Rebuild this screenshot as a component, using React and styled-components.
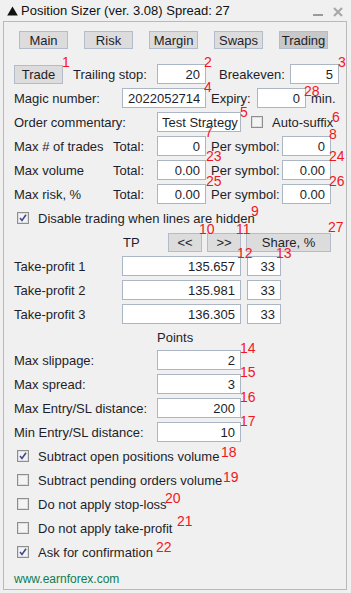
import React from 'react';
import styled, { createGlobalStyle } from 'styled-components';

const GlobalStyle = createGlobalStyle`
  body {
    margin: 0;
    background: #f0f0f0;
    font-family: "Liberation Sans", Arial, sans-serif;
    font-size: 13px;
    color: #1e1e2a;
  }
  * { box-sizing: border-box; }
`;

const Window = styled.div`
  position: relative;
  width: 351px;
  height: 593px;
  padding: 0 4px 3px 3px;
  display: flex;
  flex-direction: column;
  background: #f0f0f0;
`;

const TitleBar = styled.div`
  height: 23px;
  display: flex;
  align-items: center;
  padding: 0 4px 0 4px;
  color: #111;
`;

const TitleText = styled.span`
  margin-left: 3px;
  white-space: nowrap;
`;

const TitleIcons = styled.div`
  margin-left: auto;
  display: flex;
  align-items: center;
  gap: 10px;
  padding-top: 2px;
`;

const Body = styled.div`
  flex: 1;
  border: 1px solid #b9b9b9;
  display: flex;
  flex-direction: column;
`;

const Tabs = styled.div`
  display: flex;
  gap: 16px;
  padding: 9px 0 0 15px;
`;

const Tab = styled.div`
  width: 49px;
  height: 18px;
  border: 1px solid #b2bccb;
  background: ${p => (p.$active ? '#c8c8c8' : '#dcdcdc')};
  display: flex;
  align-items: center;
  justify-content: center;
  font-size: 13px;
`;

const Content = styled.div`
  display: flex;
  flex-direction: column;
  gap: 4px;
  padding: 15px 0 0 10px;
`;

const Row = styled.div`
  display: flex;
  align-items: center;
  height: ${p => p.$h || 20}px;
`;

const Label = styled.span`
  width: ${p => (p.$w ? `${p.$w}px` : 'auto')};
  flex-shrink: 0;
  padding-left: ${p => p.$pl || 0}px;
  white-space: nowrap;
`;

const Field = styled.input`
  width: ${p => p.$w}px;
  margin-left: ${p => p.$ml || 0}px;
  height: 20px;
  flex-shrink: 0;
  border: 1px solid #abb6c4;
  background: #fff;
  font: inherit;
  color: #1e1e2a;
  text-align: ${p => p.$align || 'right'};
  padding: ${p => (p.$align === 'left' ? '0 1px 0 4px' : '0 5px')};
  outline: none;
`;

const Button = styled.div`
  width: ${p => p.$w}px;
  margin-left: ${p => p.$ml || 0}px;
  height: 19px;
  flex-shrink: 0;
  border: 1px solid #b2bccb;
  background: #dcdcdc;
  display: flex;
  align-items: center;
  justify-content: center;
`;

const CheckRow = styled(Row)`
  padding-left: ${p => p.$pl || 3}px;
`;

const CheckLabel = styled.span`
  margin-left: 9px;
  white-space: nowrap;
`;

const Footer = styled.div`
  margin-top: 3px;
  height: 20px;
  display: flex;
  align-items: center;
  font-size: 12px;
  color: #0b7d55;
`;

const Mark = styled.span`
  position: absolute;
  left: ${p => p.$x - 1}px;
  top: ${p => p.$y - 2}px;
  font-family: "Liberation Sans", Arial, sans-serif;
  font-size: 14px;
  line-height: 1;
  color: #f2161e;
  pointer-events: none;
`;

const Box = ({ checked }) => (
  <svg width="12" height="12" viewBox="0 0 12 12">
    <rect x="0.5" y="0.5" width="11" height="11" fill="#f4f4f4" stroke="#8e8e8e" />
    <rect x="1.5" y="1.5" width="9" height="9" fill="none" stroke="#dedede" />
    {checked && (
      <path d="M3 6 L5 8.5 L9 2.8" fill="none" stroke="#3d4a8f" strokeWidth="1.6" />
    )}
  </svg>
);

const Check = ({ checked, children, pl }) => (
  <CheckRow $pl={pl}>
    <Box checked={checked} />
    <CheckLabel>{children}</CheckLabel>
  </CheckRow>
);

const marks = [
  ['1', 63, 57], ['2', 205, 57], ['3', 339, 57], ['4', 205, 82], ['28', 305, 86],
  ['5', 241, 107], ['6', 333, 112], ['7', 206, 127], ['8', 330, 129],
  ['23', 207, 151], ['24', 330, 151], ['25', 207, 176], ['26', 330, 176],
  ['9', 252, 206], ['10', 200, 224], ['11', 237, 224], ['27', 329, 222],
  ['12', 238, 248], ['13', 277, 248], ['14', 241, 343], ['15', 241, 367],
  ['16', 241, 392], ['17', 241, 416], ['18', 222, 447], ['19', 224, 472],
  ['20', 166, 493], ['21', 178, 516], ['22', 157, 542],
];

const limits = [
  ['Max # of trades', '0', '0'],
  ['Max volume', '0.00', '0.00'],
  ['Max risk, %', '0.00', '0.00'],
];

const takeProfits = [
  ['Take-profit 1', '135.657'],
  ['Take-profit 2', '135.981'],
  ['Take-profit 3', '136.305'],
];

const points = [
  ['Max slippage:', '2'],
  ['Max spread:', '3'],
  ['Max Entry/SL distance:', '200'],
  ['Min Entry/SL distance:', '10'],
];

const App = () => {
  return (
    <Window>
      <GlobalStyle />
      <TitleBar>
        <svg width="11" height="10" viewBox="0 0 11 10">
          <path d="M5.5 0.5 L10.8 9.5 L0.2 9.5 Z" fill="#111" />
        </svg>
        <TitleText>Position Sizer (ver. 3.08) Spread: 27</TitleText>
        <TitleIcons>
          <svg width="10" height="10" viewBox="0 0 10 10">
            <rect x="0" y="7" width="10" height="2" fill="#9a9a9a" />
          </svg>
          <svg width="10" height="10" viewBox="0 0 10 10">
            <path d="M1 1 L9 9 M9 1 L1 9" stroke="#a8a8a8" strokeWidth="2.2" />
          </svg>
        </TitleIcons>
      </TitleBar>
      <Body>
        <Tabs>
          <Tab>Main</Tab>
          <Tab>Risk</Tab>
          <Tab>Margin</Tab>
          <Tab>Swaps</Tab>
          <Tab $active>Trading</Tab>
        </Tabs>
        <Content>
          <Row>
            <Button $w={49}>Trade</Button>
            <Label $w={94} $pl={10}>Trailing stop:</Label>
            <Field $w={49} defaultValue="20" readOnly />
            <Label $w={84} $pl={13}>Breakeven:</Label>
            <Field $w={49} defaultValue="5" readOnly />
          </Row>
          <Row>
            <Label $w={108}>Magic number:</Label>
            <Field $w={84} defaultValue="2022052714" readOnly />
            <Label $w={51} $pl={5}>Expiry:</Label>
            <Field $w={49} defaultValue="0" readOnly />
            <Label $pl={5}>min.</Label>
          </Row>
          <Row>
            <Label $w={143}>Order commentary:</Label>
            <Field $w={84} $align="left" defaultValue="Test Strategy" readOnly />
            <CheckRow $pl={10}>
              <Box />
              <CheckLabel>Auto-suffix</CheckLabel>
            </CheckRow>
          </Row>
          {limits.map(([name, total, perSymbol]) => (
            <Row key={name}>
              <Label $w={98}>{name}</Label>
              <Label $w={45} $pl={1}>Total:</Label>
              <Field $w={49} defaultValue={total} readOnly />
              <Label $w={76} $pl={5}>Per symbol:</Label>
              <Field $w={49} defaultValue={perSymbol} readOnly />
            </Row>
          ))}
          <Check checked>Disable trading when lines are hidden</Check>
          <Row>
            <Label $w={154} $pl={109}>TP</Label>
            <Button $w={34}>&lt;&lt;</Button>
            <Button $w={34} $ml={5}>&gt;&gt;</Button>
            <Button $w={85} $ml={5}>Share, %</Button>
          </Row>
          {takeProfits.map(([name, price]) => (
            <Row key={name}>
              <Label $w={108}>{name}</Label>
              <Field $w={119} defaultValue={price} readOnly />
              <Field $w={34} $ml={6} defaultValue="33" readOnly />
            </Row>
          ))}
          <Row $h={18}>
            <Label $pl={143}>Points</Label>
          </Row>
          {points.map(([name, value]) => (
            <Row key={name}>
              <Label $w={143}>{name}</Label>
              <Field $w={84} defaultValue={value} readOnly />
            </Row>
          ))}
          <Check checked>Subtract open positions volume</Check>
          <Check>Subtract pending orders volume</Check>
          <Check>Do not apply stop-loss</Check>
          <Check>Do not apply take-profit</Check>
          <Check checked>Ask for confirmation</Check>
          <Footer>www.earnforex.com</Footer>
        </Content>
      </Body>
      {marks.map(([text, x, y]) => (
        <Mark key={text} $x={x} $y={y}>{text}</Mark>
      ))}
    </Window>
  );
};

export default App;
